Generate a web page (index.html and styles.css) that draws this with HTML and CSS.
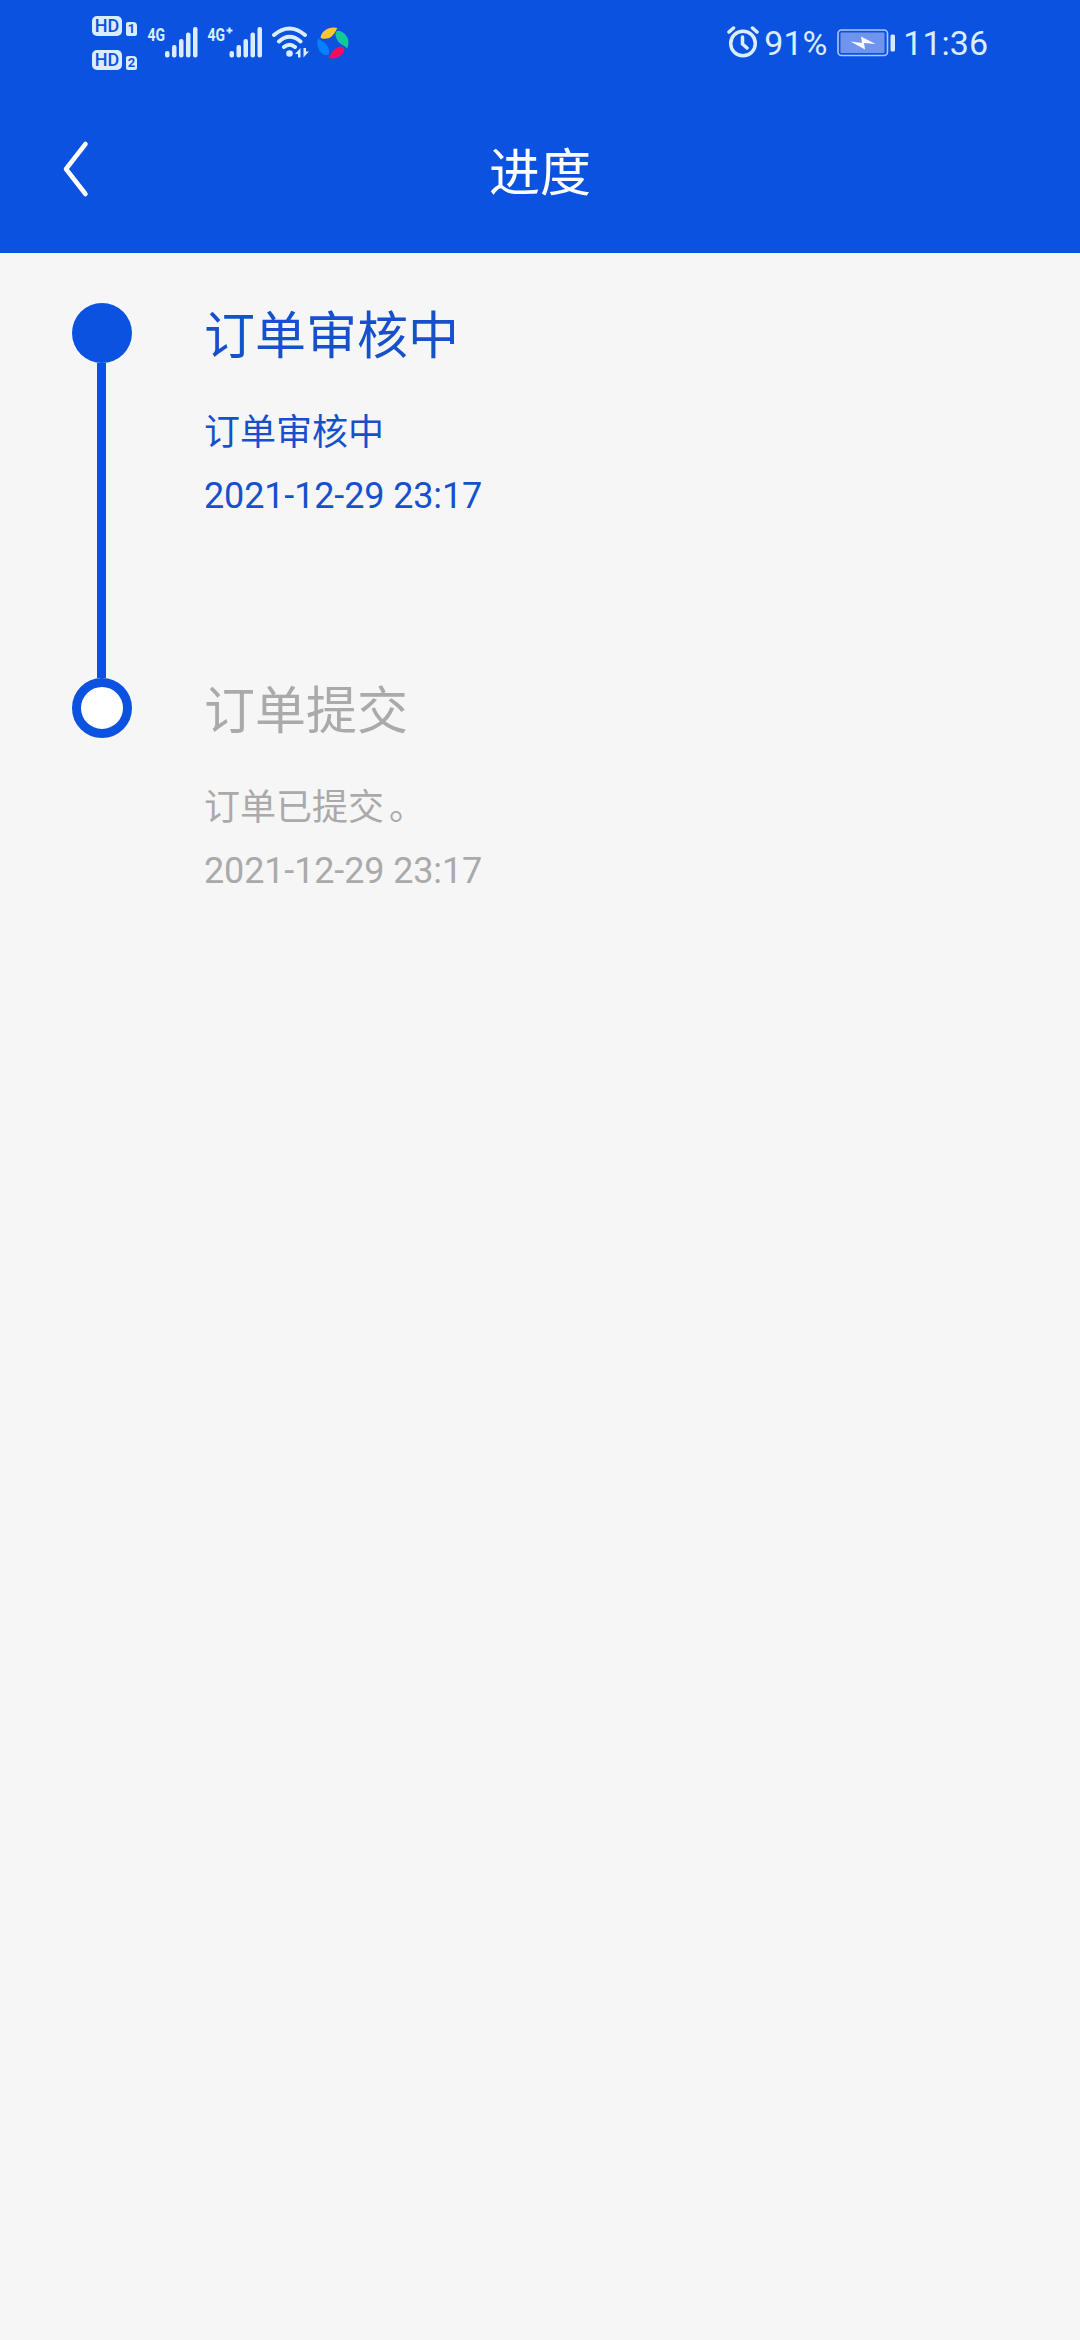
FILE: index.html
```html
<!DOCTYPE html>
<html lang="zh-CN">
<head>
<meta charset="utf-8">
<title>进度</title>
<link rel="stylesheet" href="styles.css">
</head>
<body>
<header class="header">
  <div class="status">
    <div class="status-left">
      <div class="hd-group">
        <div class="hd-row"><span class="hd">HD</span><span class="sim">1</span></div>
        <div class="hd-row"><span class="hd">HD</span><span class="sim">2</span></div>
      </div>
      <svg class="signal signal-one" viewBox="0 0 51 32" fill="currentColor">
        <text class="net" x="0.5" y="15" textLength="17.5" lengthAdjust="spacingAndGlyphs">4G</text>
        <rect x="18" y="25" width="4.5" height="6.5" rx="2"/><rect x="25" y="19" width="4.5" height="12.5" rx="2"/><rect x="32" y="13" width="4.5" height="18.5" rx="2"/><rect x="39" y="6.5" width="4.5" height="25" rx="2"/><rect x="46" y="1" width="4.5" height="30.5" rx="2"/>
      </svg>
      <svg class="signal signal-two" viewBox="0 0 56 32" fill="currentColor">
        <text class="net" x="0.5" y="15" textLength="17.5" lengthAdjust="spacingAndGlyphs">4G</text>
        <path d="M19.500 4.500h6M22.500 1.500v6" stroke="currentColor" stroke-width="2"/>
        <rect x="22.500" y="25" width="4.500" height="6.500" rx="2"/><rect x="29.500" y="19" width="4.500" height="12.500" rx="2"/><rect x="36.500" y="13" width="4.500" height="18.500" rx="2"/><rect x="43.500" y="6.500" width="4.500" height="25" rx="2"/><rect x="50.500" y="1" width="4.500" height="30.500" rx="2"/>
      </svg>
      <svg class="wifi" viewBox="0 0 38 32" fill="none" stroke="currentColor" stroke-width="4" stroke-linecap="round">
        <path d="M3 9Q18.500-4 34 9M8 15.500Q18.500 6 29.500 15.500M13 21Q18.500 16.500 24 21"/>
        <circle cx="18.500" cy="27.500" r="3.300" fill="currentColor" stroke="none"/>
        <path d="M24 28l5.500-6v9.500h-2.500v-3.500zM38 25.500l-5.500 6v-9.500h2.500v3.500z" fill="currentColor" stroke="none"/>
      </svg>
      <svg class="ball" viewBox="0 0 32 32">
        <path fill="#ffc62f" d="M3.500 10.500C5 3 13-1 20.500 1c-1.500 2-2 4-4.500 7-3 4-10 5-12.500 2.500Z"/>
        <path fill="#12c99b" d="M20 4c4-1 9 3 11 8 1 4 0 8-1 9.500-2-3-5-3-8-6-3-4-5-9-2-11.500Z"/>
        <path fill="#fb0b5b" d="M27.500 21c0 7-8 12-16.500 10 1.500-2 3-5 5.500-7.500 3.500-4 9-4.500 11-2.500Z"/>
        <path fill="#087fff" d="M1 11c2 3 5 3 8 6 3 4 4 8 2.500 10.500-4 2-8.500-2-10-6-1.500-4-1.500-7-.5-10.500Z"/>
      </svg>
    </div>
    <div class="status-right">
      <svg class="alarm" viewBox="0 0 32 32" fill="none" stroke="currentColor" stroke-width="3.500" stroke-linecap="round">
        <circle cx="16" cy="17.500" r="12.300"/><path d="M2 6l4.500-4M30 6l-4.500-4M15.500 11v7l4.500 4"/>
      </svg>
      <span class="percent">91%</span>
      <svg class="battery" viewBox="0 0 59 28">
        <rect x="1" y="1" width="49.500" height="25.500" rx="3.500" fill="none" stroke="#a9c8ff" stroke-width="1.600"/>
        <rect x="3.500" y="3.500" width="44" height="20.500" rx="1" fill="#6f94ee"/>
        <path d="M13.500 12.500l11.500 1.500-1-6.500 14.500 7.500-11.500-1 1 6.500z" fill="#fff"/>
        <rect x="53.500" y="5.500" width="4.500" height="17" rx="1.500" fill="#d4eaff"/>
      </svg>
      <span class="clock">11:36</span>
    </div>
  </div>
  <nav class="nav">
    <svg class="back" viewBox="0 0 26 58" fill="none" stroke="#fff" stroke-width="4.500" stroke-linecap="round" stroke-linejoin="round"><path d="M22.500 4L3 29l19.500 25"/></svg>
    <h1 class="nav-title">进度</h1>
  </nav>
</header>
<main class="timeline">
  <section class="step step-current">
    <div class="rail"><span class="dot"></span><span class="line"></span></div>
    <div class="detail">
      <h2 class="step-title">订单审核中</h2>
      <p class="step-text">订单审核中</p>
      <time class="step-time">2021-12-29 23:17</time>
    </div>
  </section>
  <section class="step">
    <div class="rail"><span class="dot dot-open"></span></div>
    <div class="detail">
      <h2 class="step-title">订单提交</h2>
      <p class="step-text">订单已提交<span class="stop">。</span></p>
      <time class="step-time">2021-12-29 23:17</time>
    </div>
  </section>
</main>
</body>
</html>
```
FILE: styles.css
```css
* { box-sizing: border-box; margin: 0; padding: 0; }
body { min-height: 2340px; background: #f6f6f6; font-family: Roboto, "Noto Sans CJK SC", sans-serif; }
svg { display: block; flex: none; }
.header { height: 253px; background: #0c52e0; color: #fff; }
.status { display: flex; justify-content: space-between; height: 84px; padding: 0 92px; color: #d9edff; }
.status-left, .status-right { display: flex; align-items: flex-start; }
.hd-group { display: flex; flex-direction: column; gap: 14px; padding-top: 16px; width: 55px; }
.hd-row { display: flex; align-items: flex-end; gap: 4px; height: 20px; }
.hd { width: 30px; height: 20px; border-radius: 5px; background: #d9edff; color: #0c52e0; font-size: 18px; font-weight: 500; line-height: 20px; text-align: center; }
.sim { width: 11px; height: 14px; border-radius: 2px 4px 2px 2px; background: #d9edff; color: #0c52e0; font-size: 13px; font-weight: 700; line-height: 14px; text-align: center; }
.signal { height: 32px; margin-top: 26px; overflow: visible; }
.signal-one { width: 51px; }
.signal-two { width: 56px; margin-left: 9px; }
.net { font: 700 19px Roboto, sans-serif; }
.wifi { width: 38px; height: 32px; margin: 26px 0 0 8px; }
.ball { width: 32px; height: 32px; margin: 27px 0 0 8px; }
.alarm { width: 32px; height: 32px; margin-top: 26px; }
.percent, .clock { font-size: 34px; line-height: 40px; margin-top: 23px; }
.percent { width: 63px; margin-left: 5px; }
.battery { width: 59px; height: 28px; margin: 29px 7px 0 10px; }
.nav { display: grid; grid-template-columns: 90px 1fr 90px; height: 169px; }
.back { width: 26px; height: 58px; margin: 56px 0 0 63px; }
.nav-title { font-size: 51px; font-weight: 400; line-height: 74px; text-align: center; padding-top: 53px; }
.timeline { padding: 50px 72px 0; }
.step { display: flex; gap: 72px; height: 375px; color: #aaa; }
.step-current { color: #1650cb; }
.rail { display: flex; flex-direction: column; align-items: center; width: 60px; }
.dot { flex: none; width: 60px; height: 60px; border-radius: 50%; background: #0c52e0; }
.dot-open { border: 9px solid #0c52e0; background: #fff; }
.line { flex: 1; width: 9px; margin-right: 1px; background: #0c52e0; }
.detail { padding-top: 4px; }
.step-title { font-size: 51px; font-weight: 400; line-height: 60px; }
.step-text { margin-top: 40px; font-size: 36px; line-height: 52px; }
.stop { padding-left: 5px; }
.step-time { display: block; margin-top: 15px; font-size: 36px; line-height: 44px; letter-spacing: -0.14px; }
```
